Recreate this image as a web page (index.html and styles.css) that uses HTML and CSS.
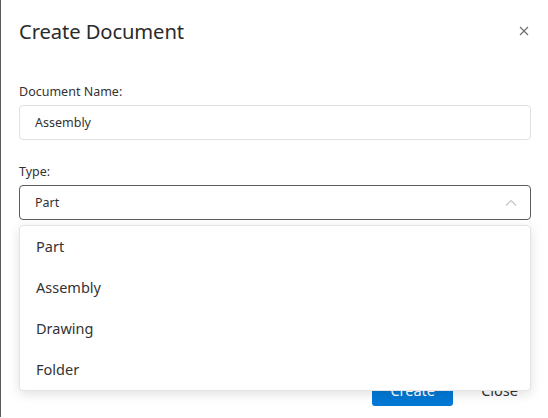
FILE: index.html
```html
<!DOCTYPE html>
<html>
<head>
<meta charset="utf-8">
<link rel="stylesheet" href="styles.css">
</head>
<body>
<div class="dialog">
  <div class="header">
    <h1 class="title">Create Document</h1>
    <span class="close-x" aria-label="close">
      <svg width="10" height="10" viewBox="0 0 10 10"><path d="M1 1L9 9M9 1L1 9" stroke="#707070" stroke-width="1.2" fill="none"/></svg>
    </span>
  </div>
  <div class="body">
    <div class="field">
      <label class="label">Document Name:</label>
      <div class="input">Assembly</div>
    </div>
    <div class="field field-type">
      <label class="label">Type:</label>
      <div class="select">
        <span>Part</span>
        <svg class="chev" width="12" height="8" viewBox="0 0 12 8"><path d="M1 6.5L6 1.5L11 6.5" stroke="#c4c4c4" stroke-width="1.2" fill="none"/></svg>
      </div>
      <ul class="menu">
        <li>Part</li>
        <li>Assembly</li>
        <li>Drawing</li>
        <li>Folder</li>
      </ul>
    </div>
  </div>
  <div class="footer">
    <button class="btn btn-primary">Create</button>
    <button class="btn btn-text">Close</button>
  </div>
</div>
</body>
</html>
```

FILE: styles.css
```css
html, body {
  margin: 0;
  padding: 0;
  background: #fff;
}
body {
  font-family: "Noto Sans", "Open Sans", sans-serif;
  color: #333;
  width: 548px;
  height: 418px;
  overflow: hidden;
}
.dialog {
  box-sizing: border-box;
  height: 417px;
  border-left: 1px solid #5a5a5a;
  padding: 0 17px 0 18px;
  display: flex;
  flex-direction: column;
}
.header {
  display: flex;
  align-items: center;
  justify-content: space-between;
  padding-top: 17px;
  height: 28px;
}
.title {
  margin: 0;
  font-size: 20.2px;
  font-weight: 400;
  line-height: 28px;
  color: #2b2b2b;
  letter-spacing: -0.1px;
}
.close-x {
  display: flex;
  margin-right: 2px;
}
.body {
  padding-top: 38px;
}
.field {
  display: flex;
  flex-direction: column;
}
.field-type {
  position: relative;
  margin-top: 23px;
}
.label {
  font-size: 12.5px;
  line-height: 18px;
  color: #333;
  margin-bottom: 4px;
}
.input, .select {
  box-sizing: border-box;
  height: 35px;
  border: 1px solid #e0e0e6;
  border-radius: 4px;
  padding: 0 15px;
  font-size: 12.5px;
  display: flex;
  align-items: center;
  color: #333;
}
.select {
  border-color: #5c5c5c;
  justify-content: space-between;
  padding-right: 13px;
}
.chev {
  display: block;
}
.menu {
  position: absolute;
  left: 0;
  right: 0;
  top: 62px;
  margin: 0;
  padding: 0;
  list-style: none;
  background: #fff;
  border: 1px solid #e4e4e4;
  border-radius: 4px;
  box-shadow: 0 3px 12px rgba(0, 0, 0, 0.12);
  z-index: 2;
}
.menu li {
  height: 41px;
  line-height: 41px;
  padding-left: 16px;
  font-size: 14.5px;
  color: #333;
}
.footer {
  margin-top: auto;
  margin-bottom: 11px;
  display: flex;
  justify-content: flex-end;
  gap: 14px;
}
.btn {
  font-family: inherit;
  font-size: 14.5px;
  height: 32px;
  border-radius: 3px;
  border: none;
  cursor: pointer;
}
.btn-primary {
  width: 81px;
  background: #0078d4;
  color: #fff;
}
.btn-text {
  background: transparent;
  color: #333;
  padding: 0 13px 0 14px;
}
```
